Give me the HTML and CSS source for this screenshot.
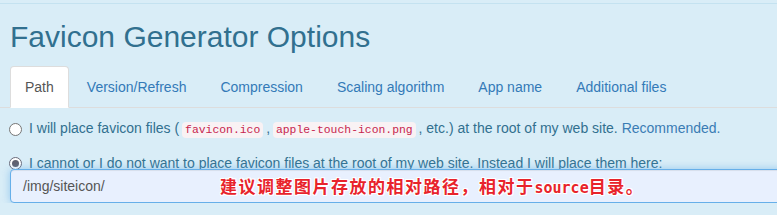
FILE: index.html
```html
<!DOCTYPE html>
<html>
<head>
<meta charset="utf-8">
<link rel="stylesheet" href="styles.css">
</head>
<body>
<div class="panel">
  <h1 class="title">Favicon Generator Options</h1>
  <ul class="tabs">
    <li class="tab active"><a>Path</a></li>
    <li class="tab"><a>Version/Refresh</a></li>
    <li class="tab"><a>Compression</a></li>
    <li class="tab"><a>Scaling algorithm</a></li>
    <li class="tab"><a>App name</a></li>
    <li class="tab"><a>Additional files</a></li>
  </ul>
  <div class="content">
    <label class="radio first">
      <span class="dot"></span>
      <span>I will place favicon files ( <code>favicon.ico</code> , <code>apple-touch-icon.png</code> , etc.) at the root of my web site. <span class="rec">Recommended.</span></span>
    </label>
    <label class="radio second">
      <span class="dot checked"></span>
      <span>I cannot or I do not want to place favicon files at the root of my web site. Instead I will place them here:</span>
    </label>
    <div class="field">
      <div class="input">/img/siteicon/</div>
      <div class="note">建议调整图片存放的相对路径，相对于<span class="src">source</span>目录。</div>
    </div>
  </div>
</div>
</body>
</html>
```

FILE: styles.css
```css
html, body {
  margin: 0;
  padding: 0;
  background: #d9edf7;
  overflow: hidden;
}
body {
  font-family: "Liberation Sans", Arial, sans-serif;
  font-size: 14px;
  line-height: 20px;
  color: #31708f;
}
.panel {
  margin-top: 3px;
  border-top: 1px solid #c4e2f0;
  width: 800px;
}
.title {
  margin: 16px 0 0 10px;
  font-size: 30px;
  line-height: 33px;
  font-weight: normal;
  color: #31708f;
}
.tabs {
  list-style: none;
  margin: 13px 0 0 0;
  padding: 0 0 0 10px;
  display: flex;
  border-bottom: 1px solid #dddddd;
}
.tab {
  margin-bottom: -1px;
  margin-right: 2px;
}
.tab a {
  display: block;
  padding: 10px 15px;
  line-height: 20px;
  border: 1px solid transparent;
  border-radius: 4px 4px 0 0;
  color: #337ab7;
}
.tab.active a {
  padding: 10px 14px;
  background: #ffffff;
  border-color: #dddddd #dddddd transparent #dddddd;
  color: #555555;
}
.content {
  padding: 0;
}
.radio {
  display: flex;
  align-items: center;
  padding-left: 9px;
  line-height: 20px;
}
.radio.first {
  margin-top: 10px;
}
.radio.second {
  margin-top: 13px;
}
.dot {
  box-sizing: border-box;
  width: 13px;
  height: 13px;
  border-radius: 50%;
  border: 1px solid #767676;
  background: #ffffff;
  margin-right: 7px;
  flex: none;
  position: relative;
}
.dot.checked {
  border-color: #6a6a7a;
  background: #ffffff;
}
.dot.checked::after {
  content: "";
  position: absolute;
  left: 2px;
  top: 2px;
  width: 7px;
  height: 7px;
  border-radius: 50%;
  background: #5f5f6e;
}
code {
  font-family: "Liberation Mono", Consolas, monospace;
  font-size: 11.4px;
  padding: 2px 3px;
  margin: 0 -1px;
  color: #c7254e;
  background: #f9f2f4;
  border-radius: 4px;
}
.rec {
  color: #3a7cb4;
}
.field {
  position: relative;
  margin: -4px 0 0 10px;
}
.input {
  box-sizing: border-box;
  height: 34px;
  padding: 6px 12px;
  border: 1px solid #66afe9;
  border-radius: 4px;
  background: #e8f0fe;
  box-shadow: inset 0 1px 1px rgba(0,0,0,.075), 0 0 8px rgba(102,175,233,.6);
  color: #555555;
  line-height: 20px;
  font-size: 14px;
}
.note {
  position: absolute;
  left: 210px;
  top: 6px;
  font-family: "Noto Sans CJK SC", sans-serif;
  font-weight: bold;
  font-size: 17px;
  line-height: 22px;
  letter-spacing: 1.5px;
  color: #e8232b;
  text-shadow: 1px 0 0 #fff, -1px 0 0 #fff, 0 1px 0 #fff, 0 -1px 0 #fff, 1px 1px 0 #fff, -1px -1px 0 #fff, 1px -1px 0 #fff, -1px 1px 0 #fff;
}
.src {
  font-family: "DejaVu Sans Mono", monospace;
  font-size: 15px;
  letter-spacing: 0;
}
```
